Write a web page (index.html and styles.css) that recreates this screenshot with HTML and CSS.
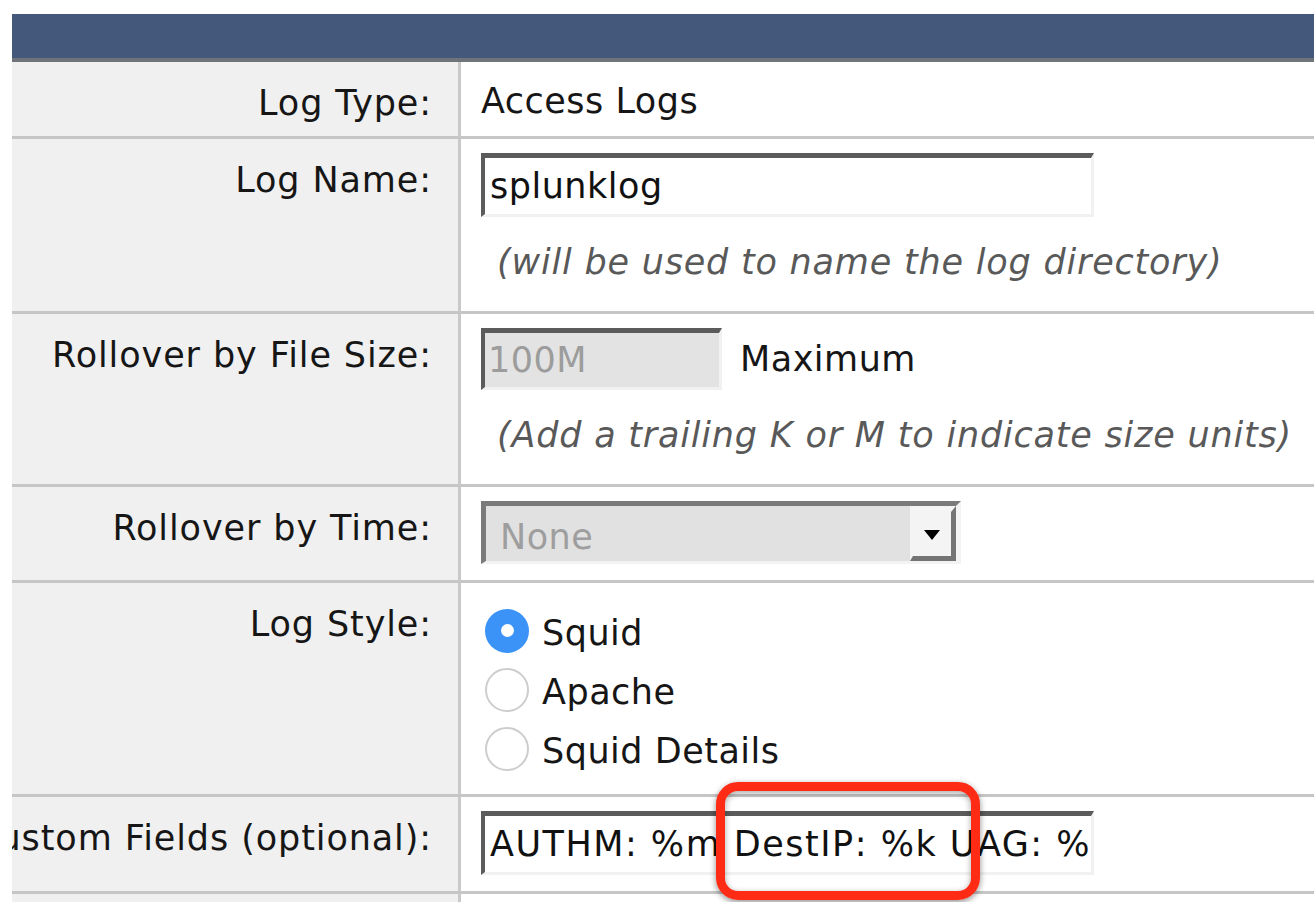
FILE: index.html
```html
<!DOCTYPE html>
<html>
<head>
<meta charset="utf-8">
<link rel="stylesheet" href="styles.css">
</head>
<body>
<div class="page">
  <div class="header"></div>
  <div class="header-rule"></div>

  <div class="row">
    <div class="label"><span>Log Type:</span></div>
    <div class="value value-text">Access Logs</div>
  </div>

  <div class="row">
    <div class="label"><span>Log Name:</span></div>
    <div class="value">
      <div class="field field-name">splunklog</div>
      <div class="hint">(will be used to name the log directory)</div>
    </div>
  </div>

  <div class="row">
    <div class="label"><span>Rollover by File Size:</span></div>
    <div class="value">
      <div class="inline">
        <div class="field field-size disabled">100M</div>
        <span class="unit">Maximum</span>
      </div>
      <div class="hint">(Add a trailing K or M to indicate size units)</div>
    </div>
  </div>

  <div class="row">
    <div class="label"><span>Rollover by Time:</span></div>
    <div class="value">
      <div class="select">
        <span class="select-text">None</span>
        <span class="select-btn"><span class="arrow"></span></span>
      </div>
    </div>
  </div>

  <div class="row">
    <div class="label"><span>Log Style:</span></div>
    <div class="value">
      <div class="radio-list">
        <div class="radio"><span class="dot checked"></span><span>Squid</span></div>
        <div class="radio"><span class="dot"></span><span>Apache</span></div>
        <div class="radio"><span class="dot"></span><span>Squid Details</span></div>
      </div>
    </div>
  </div>

  <div class="row">
    <div class="label"><span>Custom Fields (optional):</span></div>
    <div class="value">
      <div class="field field-custom">AUTHM: %m DestIP: %k UAG: %u</div>
    </div>
  </div>

  <div class="row row-last">
    <div class="label"></div>
    <div class="value"></div>
  </div>

  <div class="annot"></div>
</div>
</body>
</html>
```

FILE: styles.css
```css
html, body {
  margin: 0;
  padding: 0;
  background: #ffffff;
}

body {
  font-family: "DejaVu Sans", Verdana, sans-serif;
  font-size: 35px;
  letter-spacing: 0.5px;
  color: #161616;
  overflow: hidden;
  height: 902px;
}

.page {
  position: relative;
  margin-left: 12px;
  padding-top: 14px;
  overflow: hidden;
  height: 888px;
}

.header {
  height: 44px;
  background: #43587a;
}

.header-rule {
  height: 4px;
  background: #6f737a;
}

.row {
  display: grid;
  grid-template-columns: 449px 1fr;
  border-bottom: 3px solid #c6c6c6;
}

.label {
  box-sizing: border-box;
  background: #f0f0f0;
  border-right: 3px solid #c9c9c9;
  padding: 19px 26px 0 0;
  line-height: 44px;
  letter-spacing: 0.9px;
  display: flex;
  justify-content: flex-end;
  overflow: hidden;
  white-space: nowrap;
}

.value {
  padding: 14px 20px 16px 20px;
  min-width: 0;
}

.value-text {
  padding-top: 17px;
  padding-bottom: 13px;
  line-height: 44px;
}

.field {
  box-sizing: border-box;
  height: 64px;
  border-style: solid;
  border-width: 5px 3px 3px 4px;
  border-color: #5b5b5b #f1f1f1 #f1f1f1 #5b5b5b;
  background: #ffffff;
  line-height: 56px;
  padding-left: 5px;
  white-space: nowrap;
  overflow: hidden;
  color: #111;
}

.field-name {
  width: 613px;
}

.field-size {
  width: 241px;
  height: 62px;
  line-height: 54px;
  padding-left: 3px;
}

.field-custom {
  width: 613px;
  height: 64px;
  line-height: 56px;
  letter-spacing: 1.5px;
}

.disabled {
  background: #e3e3e3;
  color: #9c9c9c;
}

.inline {
  display: flex;
  align-items: center;
  gap: 18px;
}

.unit {
  line-height: 62px;
}

.hint {
  font-style: italic;
  color: #595959;
  letter-spacing: 0.8px;
  line-height: 50px;
  margin: 20px 0 8px 16px;
  white-space: nowrap;
}

.select {
  box-sizing: border-box;
  width: 480px;
  height: 63px;
  display: flex;
  align-items: stretch;
  border-style: solid;
  border-width: 5px 5px 3px 5px;
  border-color: #7a7a7a #f3f3f3 #f3f3f3 #7a7a7a;
  background: #e1e1e1;
}

.select-text {
  flex: 1;
  color: #9e9e9e;
  line-height: 55px;
  padding-top: 4px;
  padding-left: 14px;
}

.select-btn {
  box-sizing: border-box;
  width: 46px;
  background: #f4f4f4;
  border-style: solid;
  border-width: 6px 5px 5px 3px;
  border-color: #f4f4f4 #747474 #747474 #f4f4f4;
  display: flex;
  align-items: center;
  justify-content: center;
}

.arrow {
  width: 0;
  height: 0;
  border-left: 8px solid transparent;
  border-right: 8px solid transparent;
  border-top: 10px solid #000;
  margin-top: 2px;
}

.radio-list {
  margin-top: 4px;
}

.radio {
  display: flex;
  align-items: center;
  height: 59px;
  gap: 13px;
}

.radio span:last-child {
  position: relative;
  top: 2px;
}

.dot {
  box-sizing: border-box;
  width: 44px;
  height: 44px;
  margin-left: 4px;
  border-radius: 50%;
  border: 2px solid #cdcdcd;
  background: #ffffff;
  flex: none;
  display: flex;
  align-items: center;
  justify-content: center;
}

.dot.checked {
  border: none;
  background: #3b93f7;
}

.dot.checked::after {
  content: "";
  width: 13px;
  height: 13px;
  border-radius: 50%;
  background: #ffffff;
}

.row-last {
  border-bottom: none;
  height: 40px;
}

.annot {
  position: absolute;
  left: 704px;
  top: 782px;
  width: 264px;
  height: 118px;
  box-sizing: border-box;
  border: 9px solid #ff2b14;
  border-radius: 22px;
  box-shadow: 0 2px 6px rgba(0, 0, 0, 0.45), inset 0 2px 6px rgba(0, 0, 0, 0.35);
}
```
